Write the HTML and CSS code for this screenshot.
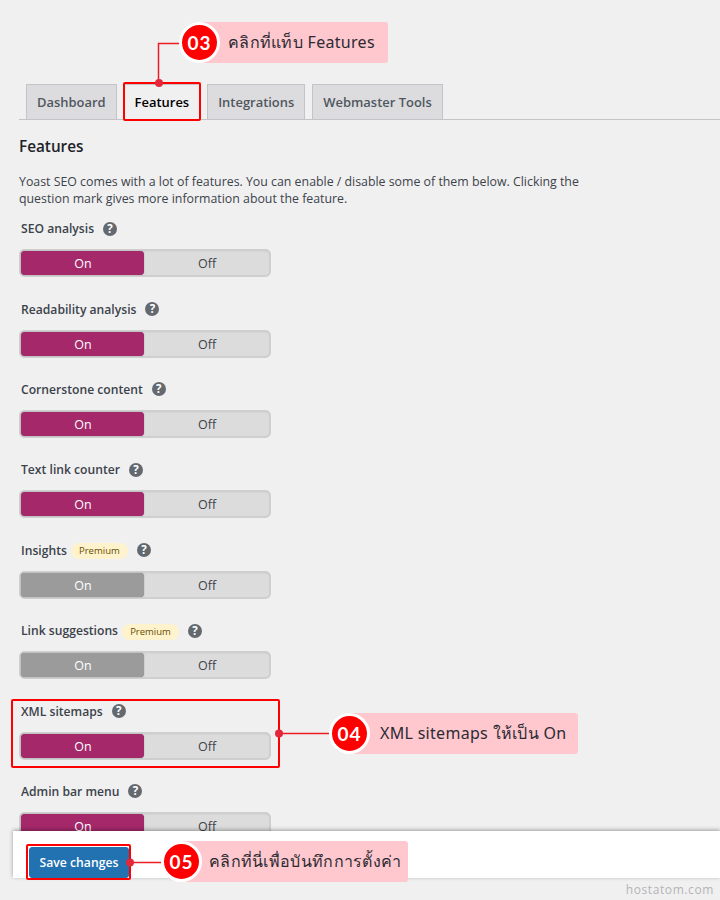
FILE: index.html
```html
<!DOCTYPE html>
<html lang="en">
<head>
<meta charset="utf-8">
<title>Yoast SEO Features</title>
<link rel="stylesheet" href="styles.css">
</head>
<body>
<div class="page">
  <nav class="tabs">
    <a class="tab">Dashboard</a>
    <a class="tab active">Features</a>
    <a class="tab">Integrations</a>
    <a class="tab">Webmaster Tools</a>
  </nav>
  <main class="content">
    <h2 class="title">Features</h2>
    <p class="intro">Yoast SEO comes with a lot of features. You can enable / disable some of them below. Clicking the question mark gives more information about the feature.</p>
    <div class="rows">
      <section class="row"><div class="label"><span>SEO analysis</span><i class="help">?</i></div>
        <div class="toggle"><span class="on">On</span><span class="off">Off</span></div></section>
      <section class="row"><div class="label"><span>Readability analysis</span><i class="help">?</i></div>
        <div class="toggle"><span class="on">On</span><span class="off">Off</span></div></section>
      <section class="row"><div class="label"><span>Cornerstone content</span><i class="help">?</i></div>
        <div class="toggle"><span class="on">On</span><span class="off">Off</span></div></section>
      <section class="row"><div class="label"><span>Text link counter</span><i class="help">?</i></div>
        <div class="toggle"><span class="on">On</span><span class="off">Off</span></div></section>
      <section class="row"><div class="label"><span>Insights</span><b class="premium">Premium</b><i class="help">?</i></div>
        <div class="toggle"><span class="on disabled">On</span><span class="off">Off</span></div></section>
      <section class="row"><div class="label"><span>Link suggestions</span><b class="premium">Premium</b><i class="help">?</i></div>
        <div class="toggle"><span class="on disabled">On</span><span class="off">Off</span></div></section>
      <section class="row"><div class="label"><span>XML sitemaps</span><i class="help">?</i></div>
        <div class="toggle"><span class="on">On</span><span class="off">Off</span></div></section>
      <section class="row"><div class="label"><span>Admin bar menu</span><i class="help">?</i></div>
        <div class="toggle"><span class="on">On</span><span class="off">Off</span></div></section>
    </div>
  </main>

  <div class="savebar"><button class="save">Save changes</button></div>
  <div class="watermark">hostatom.com</div>

  <div class="hl hl-tab"></div>
  <div class="hl hl-xml"></div>
  <div class="hl hl-save"></div>

  <svg class="wires" width="720" height="900" viewBox="0 0 720 900">
    <path d="M158.500 83V43.500H182" />
    <path d="M279 733.500H332" />
    <path d="M130 862.500H165" />
    <circle cx="159" cy="83" r="4" />
    <circle cx="279" cy="733.500" r="4" />
    <circle cx="130" cy="862.500" r="4" />
  </svg>

  <div class="callout c3"><span class="num">03</span><span class="note">คลิกที่แท็บ Features</span></div>
  <div class="callout c4"><span class="num">04</span><span class="note">XML sitemaps ให้เป็น On</span></div>
  <div class="callout c5"><span class="num">05</span><span class="note">คลิกที่นี่เพื่อบันทึกการตั้งค่า</span></div>
</div>
</body>
</html>
```
FILE: styles.css
```css
* { box-sizing: border-box; }
html, body { margin: 0; padding: 0; }
body {
  background: #f0f0f1;
  font-family: "Open Sans", "Noto Sans", "DejaVu Sans", sans-serif;
  color: #3c434a;
}
.page { position: relative; width: 720px; height: 900px; overflow: hidden; }

.tabs {
  display: flex;
  gap: 7px;
  margin: 84px 0 0 19px;
  padding-left: 7px;
  height: 36px;
  border-bottom: 1px solid #c3c4c7;
}
.tab {
  height: 36px;
  padding: 0 10px;
  border: 1px solid #c3c4c7;
  background: #dcdcde;
  color: #50575e;
  font-size: 12.950px;
  font-weight: 600;
  line-height: 34px;
}
.tab.active { background: #f0f0f1; border-bottom-color: #f0f0f1; color: #000; }

.content { padding: 0 0 0 19px; }
.title { margin: 15px 0 0; font-size: 15.300px; line-height: 22px; font-weight: 600; color: #1d2327; }
.intro { width: 580px; margin: 16px 0 0; font-size: 12.350px; line-height: 17px; color: #3c434a; }

.rows { margin-top: 11.200px; }
.row { height: 80.400px; }
.label { display: flex; align-items: center; height: 21px; padding-left: 2px; font-size: 12.150px; font-weight: 600; color: #3c434a; }
.help {
  width: 14px; height: 14px; margin-left: 9px;
  border-radius: 50%;
  background: #646970;
  color: #fff;
  font: normal 700 11.500px/14px "Open Sans", sans-serif;
  text-align: center;
}
.premium {
  margin: 2px 0 0 4px; height: 16px; width: 57px;
  border-radius: 8px;
  background: #fff3cd;
  color: #674e00;
  font-size: 9.500px; font-weight: 400; line-height: 16px;
  text-align: center;
}
.toggle {
  display: flex;
  width: 252px; height: 28px;
  margin-top: 10px;
  padding: 2px;
  border-radius: 6px;
  background: #dcdcdc;
  box-shadow: inset 0 0 0 2px #cfcfcf, inset 0 2px 2px rgba(0,0,0,.1);
  font-size: 12.500px;
  line-height: 26px;
  text-align: center;
}
.on { width: 123px; padding-left: 1px; border-radius: 4px; background: #a4286a; color: #fff; box-shadow: 0 0 1px rgba(0,0,0,.6); }
.on.disabled { background: #9b9b9b; }
.off { flex: 1; padding-left: 1px; color: #3c434a; }

.savebar {
  position: absolute; left: 13px; right: 0; top: 831px; height: 47px;
  padding: 16px 0 0 16px;
  background: #fff;
  box-shadow: 0 -1px 4px rgba(0,0,0,.35);
}
.save {
  display: block;
  width: 100px; height: 31px; padding: 0;
  border: 1px solid #2271b1; border-radius: 3px;
  background: #2271b1; color: #fff;
  font: 600 12.200px/29px "Open Sans", sans-serif;
}
.watermark {
  position: absolute; right: 6px; top: 882px;
  font-size: 12px; line-height: 16px; letter-spacing: .6px; color: #b4b4b8;
}

.hl { position: absolute; border: 2px solid #f00; border-radius: 2px; }
.hl-tab { left: 123px; top: 82px; width: 78px; height: 39px; }
.hl-xml { left: 11px; top: 699px; width: 269px; height: 69px; }
.hl-save { left: 26px; top: 844px; width: 105px; height: 36px; }

.wires { position: absolute; left: 0; top: 0; pointer-events: none; }
.wires path { fill: none; stroke: #ed1c24; stroke-width: 1.500; }
.wires circle { fill: #e4283c; }

.callout { position: absolute; display: flex; align-items: center; height: 41px; border-radius: 3px; background: #ffc7ce; }
.c3 { left: 199px; top: 22px; width: 189px; }
.c4 { left: 349px; top: 713px; width: 229px; }
.c5 { left: 181px; top: 841px; width: 227px; }
.num {
  flex: none;
  width: 41px; height: 41px; margin-left: -20px;
  border: 3px solid #fff; border-radius: 50%;
  background: #f00; color: #fff;
  font: 700 19px/35px "Lato", "Open Sans", sans-serif;
  letter-spacing: 1px;
  text-align: center;
}
.note { margin-left: 8px; font-family: "Noto Sans", "DejaVu Sans", sans-serif; font-size: 16px; font-weight: 400; letter-spacing: .3px; color: #2b2b33; white-space: nowrap; }
.c4 .note { margin-left: 10px; }
.c5 .note { margin-left: 7px; }
```
